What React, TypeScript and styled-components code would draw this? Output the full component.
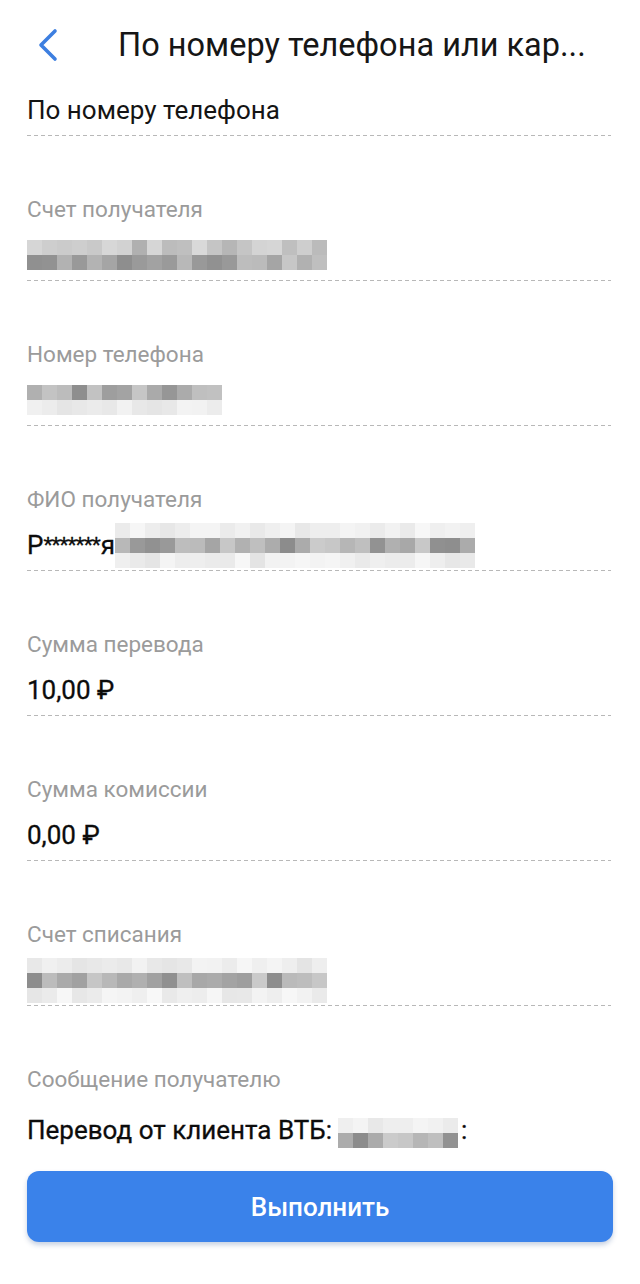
import React from 'react'
import styled, {createGlobalStyle} from 'styled-components'

const GlobalStyle = createGlobalStyle`
  html, body {
    margin: 0;
    padding: 0;
    background: #ffffff;
  }
  body {
    font-family: Roboto, "Noto Sans", "Liberation Sans", sans-serif;
    -webkit-font-smoothing: antialiased;
  }
`

// pseudo-random grey blocks standing in for the blurred personal data
type MosaicRow = { min: number; max: number }

const rand = (seed: number) => {
  const x = Math.sin(seed * 9301 + 49297) * 233280
  return x - Math.floor(x)
}

interface IMosaicProps {
  cols: number
  rows: MosaicRow[]
  seed: number
  offset?: number
  gap?: number
}

const Mosaic: React.FC<IMosaicProps> = ({cols, rows, seed, offset = 0, gap = 0}) => (
  <MosaicGrid style={{gridTemplateColumns: `repeat(${cols}, 15px)`}} $offset={offset} $gap={gap}>
    {rows.map((row, r) =>
      Array.from({length: cols}).map((_, c) => {
        const t = rand(seed + r * 37 + c * 3)
        const v = Math.round(row.min + (row.max - row.min) * t)
        return <Tile key={`${r}-${c}`} style={{background: `rgb(${v},${v},${v})`}} />
      })
    )}
  </MosaicGrid>
)

const dark: MosaicRow = {min: 140, max: 205}
const mid: MosaicRow = {min: 175, max: 222}
const faint: MosaicRow = {min: 228, max: 248}

interface IFieldProps {
  label: string
  children: React.ReactNode
  last?: boolean
  gap?: number
}

const Field: React.FC<IFieldProps> = ({label, children, last, gap = 19}) => (
  <FieldBox $last={last}>
    <Label>{label}</Label>
    <Value $gap={gap}>{children}</Value>
  </FieldBox>
)

const App: React.FC = () => {
  return (
    <>
      <GlobalStyle />
      <Page>
        <Header>
          <BackButton aria-label="back">
            <svg width="24" height="36" viewBox="0 0 24 36" fill="none">
              <path d="M18 4 L4 18 L18 32" stroke="#3d7fe0" strokeWidth="3.6" strokeLinecap="round" strokeLinejoin="round" />
            </svg>
          </BackButton>
          <Title>По номеру телефона или кар...</Title>
        </Header>

        <TypeRow>По номеру телефона</TypeRow>

        <Field label="Счет получателя">
          <Mosaic cols={20} rows={[mid, dark]} seed={11} />
        </Field>
        <Field label="Номер телефона">
          <Mosaic cols={13} rows={[dark, faint]} seed={23} />
        </Field>
        <Field label="ФИО получателя">
          <Strong>Р</Strong>
          <Masked>*******</Masked>
          <Strong>я</Strong>
          <Mosaic cols={24} rows={[faint, dark, faint]} seed={41} />
        </Field>
        <Field label="Сумма перевода">
          <Strong>10,00 ₽</Strong>
        </Field>
        <Field label="Сумма комиссии">
          <Strong>0,00 ₽</Strong>
        </Field>
        <Field label="Счет списания">
          <Mosaic cols={20} rows={[faint, dark, faint]} seed={57} />
        </Field>
        <Field label="Сообщение получателю" last gap={24}>
          <Strong>Перевод от клиента ВТБ:</Strong>
          <Mosaic cols={8} rows={[faint, dark]} seed={71} offset={6} gap={6} />
          <Strong>:</Strong>
        </Field>

        <SubmitButton>Выполнить</SubmitButton>
      </Page>
    </>
  )
}

export default App

const Page = styled.div`
  width: 640px;
  min-height: 1284px;
  box-sizing: border-box;
  padding: 0 27px 0 27px;
  display: flex;
  flex-direction: column;
  background: #fff;
`

const Header = styled.header`
  height: 90px;
  display: flex;
  align-items: center;
  gap: 55px;
  margin-left: 8px;
`

const BackButton = styled.button`
  border: none;
  background: none;
  padding: 0;
  width: 28px;
  height: 36px;
  display: flex;
  align-items: center;
  justify-content: center;
`

const Title = styled.h1`
  margin: 0;
  font-size: 32.5px;
  font-weight: 400;
  color: #161616;
  white-space: nowrap;
`

const dashed = `
  background-image: repeating-linear-gradient(to right, #b8b8b8 0 4px, transparent 4px 7px);
  background-size: 100% 1px;
  background-repeat: no-repeat;
  background-position: left bottom;
`

const TypeRow = styled.div`
  margin-top: 5px;
  width: 584px;
  font-size: 26px;
  line-height: 30px;
  color: #141414;
  height: 30px;
  box-sizing: content-box;
  padding-bottom: 11px;
  ${dashed}
`

const FieldBox = styled.div<{$last?: boolean}>`
  width: 584px;
  padding-top: 60px;
  padding-bottom: ${(p) => (p.$last ? '0' : '12px')};
  ${(p) => (p.$last ? '' : dashed)}
`

const Label = styled.div`
  font-size: 22.5px;
  line-height: 26px;
  color: #9b9b9b;
`

const Value = styled.div<{$gap: number}>`
  margin-top: ${(p) => p.$gap}px;
  height: 28px;
  display: flex;
  align-items: center;
`

const Strong = styled.span`
  font-size: 26px;
  font-weight: 400;
  line-height: 28px;
  color: #0c0c0c;
  white-space: nowrap;
  -webkit-text-stroke: 0.3px #0c0c0c;
`

const Masked = styled(Strong)`
  font-size: 21px;
  letter-spacing: -1px;
  margin-right: 1px;
`

const MosaicGrid = styled.div<{$offset: number; $gap: number}>`
  display: grid;
  grid-auto-rows: 15px;
  margin-top: ${(p) => p.$offset}px;
  margin-left: ${(p) => p.$gap}px;
  margin-right: ${(p) => p.$gap / 2}px;
`

const Tile = styled.span`
  display: block;
`

const SubmitButton = styled.button`
  margin-top: 27px;
  width: 586px;
  height: 71px;
  border: none;
  border-radius: 12px;
  background: #3a82ea;
  color: #fff;
  font-family: Roboto, "Noto Sans", sans-serif;
  font-size: 26px;
  font-weight: 500;
  box-shadow: 0 3px 5px rgba(30, 70, 140, 0.25);
`
